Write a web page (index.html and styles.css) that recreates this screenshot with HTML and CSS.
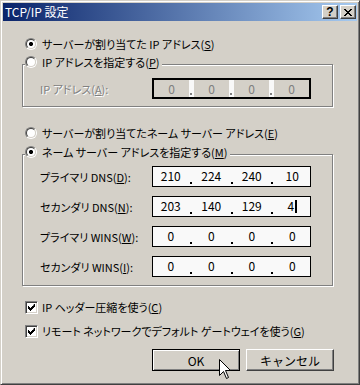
FILE: index.html
```html
<!DOCTYPE html>
<html lang="ja">
<head>
    <meta charset="UTF-8">
    <title>TCP/IP 設定</title>
    <link rel="stylesheet" href="styles.css">
</head>
<body>
    <div class="window">
        <div class="titlebar">
            <span class="title">TCP/IP 設定</span>
            <div class="caption-buttons">
                <span class="cap cap-help">?</span>
                <span class="cap">
                    <svg width="8" height="7" viewBox="0 0 8 7"><path d="M0 0h2v1h-2zM6 0h2v1h-2zM1 1h2v1h-2zM5 1h2v1h-2zM2 2h4v1h-4zM3 3h2v1h-2zM2 4h4v1h-4zM1 5h2v1h-2zM5 5h2v1h-2zM0 6h2v1h-2zM6 6h2v1h-2z" fill="#000"/></svg>
                </span>
            </div>
        </div>

        <div class="content">
            <div class="option"><span class="radio checked"></span><span>サーバーが割り当てた IP アドレス(<u>S</u>)</span></div>

            <div class="group group-ip">
                <div class="legend"><span class="radio"></span><span>IP アドレスを指定する(<u>P</u>)</span></div>
                <div class="row first">
                    <span class="field-label disabled">IP アドレス(<u>A</u>):</span>
                    <div class="ipbox off">
                        <span class="octet">0</span><span class="dot"></span>
                        <span class="octet">0</span><span class="dot"></span>
                        <span class="octet">0</span><span class="dot"></span>
                        <span class="octet">0</span>
                    </div>
                </div>
            </div>

            <div class="option option-gap"><span class="radio"></span><span>サーバーが割り当てたネーム サーバー アドレス(<u>E</u>)</span></div>

            <div class="group group-dns">
                <div class="legend"><span class="radio checked"></span><span>ネーム サーバー アドレスを指定する(<u>M</u>)</span></div>
                <div class="row first">
                    <span class="field-label">プライマリ DNS(<u>D</u>):</span>
                    <div class="ipbox">
                        <span class="octet">210</span><span class="dot"></span>
                        <span class="octet">224</span><span class="dot"></span>
                        <span class="octet">240</span><span class="dot"></span>
                        <span class="octet">10</span>
                    </div>
                </div>
                <div class="row">
                    <span class="field-label">セカンダリ DNS(<u>N</u>):</span>
                    <div class="ipbox">
                        <span class="octet">203</span><span class="dot"></span>
                        <span class="octet">140</span><span class="dot"></span>
                        <span class="octet">129</span><span class="dot"></span>
                        <span class="octet">4<span class="caret"></span></span>
                    </div>
                </div>
                <div class="row">
                    <span class="field-label">プライマリ WINS(<u>W</u>):</span>
                    <div class="ipbox">
                        <span class="octet">0</span><span class="dot"></span>
                        <span class="octet">0</span><span class="dot"></span>
                        <span class="octet">0</span><span class="dot"></span>
                        <span class="octet">0</span>
                    </div>
                </div>
                <div class="row">
                    <span class="field-label">セカンダリ WINS(<u>I</u>):</span>
                    <div class="ipbox">
                        <span class="octet">0</span><span class="dot"></span>
                        <span class="octet">0</span><span class="dot"></span>
                        <span class="octet">0</span><span class="dot"></span>
                        <span class="octet">0</span>
                    </div>
                </div>
            </div>

            <div class="check first-check">
                <span class="box"><svg width="7" height="7" viewBox="0 0 7 7"><path d="M6 0h1v3h-1v1h-1v1h-1v1h-1v1h-1v-1h-1v-1h-1v-3h1v1h1v1h1v-1h1v-1h1z" fill="#000"/></svg></span>
                <span>IP ヘッダー圧縮を使う(<u>C</u>)</span>
            </div>
            <div class="check">
                <span class="box"><svg width="7" height="7" viewBox="0 0 7 7"><path d="M6 0h1v3h-1v1h-1v1h-1v1h-1v1h-1v-1h-1v-1h-1v-3h1v1h1v1h1v-1h1v-1h1z" fill="#000"/></svg></span>
                <span>リモート ネットワークでデフォルト ゲートウェイを使う(<u>G</u>)</span>
            </div>

            <div class="buttons">
                <button class="btn btn-default">OK</button>
                <button class="btn">キャンセル</button>
            </div>
        </div>

        <svg class="pointer" width="12" height="20" viewBox="0 0 12 20">
            <path d="M0.5 0.5V16.5L4.5 12.5L7.5 19.5L9.5 18.5L6.5 11.5H11.5Z" fill="#fff" stroke="#000" stroke-width="1"/>
        </svg>
    </div>
</body>
</html>
```

FILE: styles.css
```css
body {
    margin: 0;
    background-color: #d4d0c8;
    font-family: "Noto Sans CJK JP", "Liberation Sans", sans-serif;
    font-size: 11px;
    font-feature-settings: "palt" 1;
    color: #000;
}

.window {
    position: relative;
    width: 360px;
    height: 385px;
    box-sizing: border-box;
    background-color: #d4d0c8;
    border: 1px solid;
    border-color: #d4d0c8 #404040 #404040 #d4d0c8;
    box-shadow: inset 1px 1px #fff, inset -1px -1px #808080;
    padding: 2px;
}

.titlebar {
    height: 18px;
    display: flex;
    align-items: center;
    justify-content: space-between;
    padding: 0 1px 0 2px;
    background: linear-gradient(to right, #0a246a, #a6caf0);
    color: #fff;
}

.title {
    line-height: 18px;
    font-size: 12px;
}

.caption-buttons {
    display: flex;
    gap: 2px;
}

.cap {
    width: 16px;
    height: 14px;
    box-sizing: border-box;
    display: flex;
    align-items: center;
    justify-content: center;
    background-color: #d4d0c8;
    border: 1px solid;
    border-color: #fff #404040 #404040 #fff;
    box-shadow: inset -1px -1px #808080;
    color: #000;
}

.cap-help {
    font-family: "Liberation Sans", sans-serif;
    font-weight: bold;
    font-size: 12px;
    line-height: 12px;
}

.content {
    padding: 15px 23px 0 19px;
}

.option {
    display: flex;
    align-items: center;
    gap: 5px;
    height: 16px;
    margin-left: 3px;
    white-space: nowrap;
}

.option-gap {
    margin-top: 18px;
}

.radio {
    width: 12px;
    height: 12px;
    box-sizing: border-box;
    border-radius: 50%;
    border: 1px solid;
    border-color: #808080 #fff #fff #808080;
    display: flex;
    align-items: center;
    justify-content: center;
    flex-shrink: 0;
}

.radio::before {
    content: "";
    width: 10px;
    height: 10px;
    box-sizing: border-box;
    border-radius: 50%;
    border: 1px solid;
    border-color: #404040 #d4d0c8 #d4d0c8 #404040;
    background-color: #fff;
}

.radio.checked::before {
    background: radial-gradient(circle, #000 0, #000 2px, #fff 2.2px);
}

.group {
    width: 311px;
    box-sizing: border-box;
    border: 1px solid #808080;
    box-shadow: inset 1px 1px #fff, 1px 1px #fff;
}

.group-ip {
    margin-top: 12px;
    padding-bottom: 7px;
}

.group-dns {
    margin-top: 13px;
    padding-bottom: 8px;
}

.legend {
    display: flex;
    align-items: center;
    gap: 5px;
    width: max-content;
    height: 16px;
    margin: -11px 0 0 2px;
    padding-right: 2px;
    background-color: #d4d0c8;
    white-space: nowrap;
}

.row {
    display: flex;
    align-items: center;
    padding-left: 17px;
    margin-top: 9px;
}

.group-ip .row.first {
    margin-top: 8px;
}

.group-dns .row.first {
    margin-top: 6px;
}

.field-label {
    width: 112px;
    white-space: nowrap;
}

.disabled {
    color: #808080;
    text-shadow: 1px 1px #fff;
}

.ipbox {
    width: 159px;
    height: 21px;
    box-sizing: border-box;
    border: 1px solid #000;
    background-color: #f9f9f9;
    display: flex;
    font-size: 12px;
}

.octet {
    flex: 1;
    text-align: center;
    line-height: 18px;
}

.dot {
    width: 5px;
    display: flex;
    align-items: flex-end;
    justify-content: center;
    padding-bottom: 2px;
}

.dot::before {
    content: "";
    width: 2px;
    height: 2px;
    background-color: #000;
}

.ipbox.off {
    border-width: 2px;
    background-color: #d4d0c8;
    color: #808080;
}

.ipbox.off .dot {
    background-color: #f9f9f9;
    justify-content: flex-start;
    padding-left: 1px;
    width: 4px;
}

.ipbox.off .dot::before {
    background-color: #808080;
}

.caret {
    display: inline-block;
    width: 2px;
    height: 13px;
    margin-left: 1px;
    background-color: #000;
    vertical-align: -2px;
}

.check {
    display: flex;
    align-items: center;
    gap: 4px;
    height: 16px;
    margin: 8px 0 0 3px;
    white-space: nowrap;
}

.check.first-check {
    margin-top: 13px;
}

.box {
    width: 13px;
    height: 13px;
    box-sizing: border-box;
    border: 1px solid;
    border-color: #808080 #fff #fff #808080;
    box-shadow: inset 1px 1px #404040, inset -1px -1px #d4d0c8;
    background-color: #fff;
    display: flex;
    align-items: center;
    justify-content: center;
}

.buttons {
    display: flex;
    justify-content: flex-end;
    gap: 6px;
    margin-top: 10px;
}

.btn {
    width: 88px;
    height: 22px;
    box-sizing: border-box;
    font-family: inherit;
    font-size: 12px;
    color: #000;
    background-color: #d4d0c8;
    border: 1px solid;
    border-color: #fff #404040 #404040 #fff;
    box-shadow: inset -1px -1px #808080;
    padding: 0;
}

.btn-default {
    border-color: #000;
    box-shadow: inset 1px 1px #fff, inset -1px -1px #808080;
}

.pointer {
    position: absolute;
    left: 218px;
    top: 358px;
}
```
